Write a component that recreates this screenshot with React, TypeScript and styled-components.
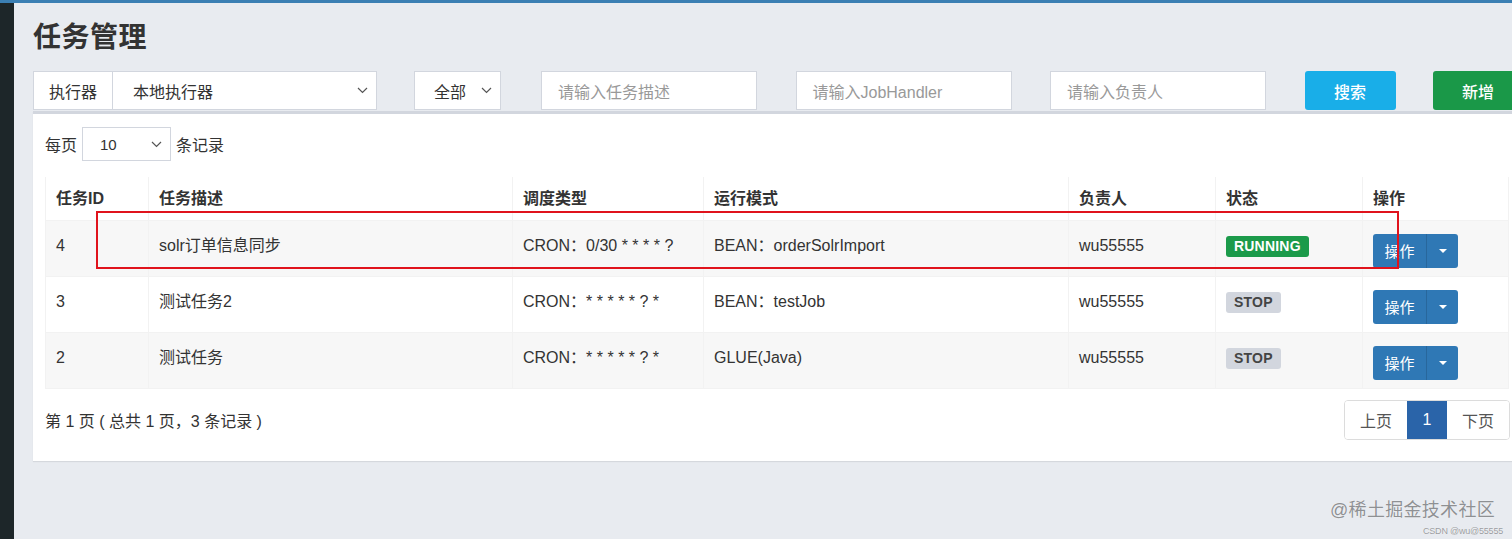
import React from "react";
import styled, { createGlobalStyle } from "styled-components";

const GlobalStyle = createGlobalStyle`
  html, body {
    margin: 0;
    padding: 0;
    overflow: hidden;
    background: #e8ebf0;
  }
  body {
    font-family: "Liberation Sans", "Noto Sans CJK SC", sans-serif;
    color: #333;
    font-size: 16px;
  }
  * { box-sizing: border-box; }
`;

const Page = styled.div`
  position: relative;
  height: 539px;
  display: flex;
  flex-direction: column;
`;

const TopBar = styled.div`
  height: 3px;
  background: #3b7fb3;
  flex: none;
`;

const Body = styled.div`
  display: flex;
  flex: 1;
`;

const Sidebar = styled.div`
  width: 14px;
  flex: none;
  background: #1d2629;
`;

const Main = styled.div`
  width: 1506px;
  flex: none;
  padding: 18px 0 0 19px;
`;

const Title = styled.h1`
  margin: 0;
  font-size: 28px;
  line-height: 34px;
  font-weight: 700;
  color: #333;
  letter-spacing: 0.5px;
`;

const FilterRow = styled.div`
  display: flex;
  align-items: stretch;
  height: 39px;
  margin-top: 16px;
`;

const InputGroup = styled.div`
  display: flex;
  width: 344px;
  margin-right: 37px;
`;

const Addon = styled.div`
  width: 79px;
  display: flex;
  align-items: center;
  justify-content: center;
  background: #fff;
  border: 1px solid #d2d6de;
  border-right: none;
  font-size: 16px;
  color: #333;
`;

const SelectBox = styled.div<{ $w: number; $pl: number; $mr?: number; $h?: number }>`
  width: ${(p) => p.$w}px;
  height: ${(p) => (p.$h ? `${p.$h}px` : "auto")};
  margin-right: ${(p) => p.$mr ?? 0}px;
  display: flex;
  align-items: center;
  justify-content: space-between;
  padding: 0 8px 0 ${(p) => p.$pl}px;
  background: #fff;
  border: 1px solid #d2d6de;
  font-size: 16px;
  color: #333;
  flex: none;
`;

const TextInput = styled.div`
  width: 216px;
  margin-right: 38.5px;
  display: flex;
  align-items: center;
  padding-left: 16px;
  background: #fff;
  border: 1px solid #d2d6de;
  color: #999;
  font-size: 16px;
  flex: none;
`;

const Button = styled.div<{ $bg: string; $mr?: number }>`
  width: 91px;
  flex: none;
  margin-right: ${(p) => p.$mr ?? 0}px;
  display: flex;
  align-items: center;
  justify-content: center;
  background: ${(p) => p.$bg};
  border-radius: 3px;
  color: #fff;
  font-size: 16px;
  font-weight: 500;
`;

const Box = styled.div`
  margin-top: 1px;
  width: 1487px;
  background: #fff;
  border-top: 3px solid #d2d6de;
  box-shadow: 0 1px 1px rgba(0, 0, 0, 0.08);
  padding: 13px 12px 21px;
`;

const LengthRow = styled.div`
  display: flex;
  align-items: center;
  gap: 5px;
  height: 34px;
  font-size: 16px;
`;

const Table = styled.table`
  margin-top: 16px;
  width: 1463px;
  border-collapse: collapse;
  table-layout: fixed;
  font-size: 16px;
`;

const Th = styled.th`
  text-align: left;
  font-weight: 700;
  padding: 10px 10px;
  line-height: 23px;
  border: 1px solid #f2f2f2;
  border-top: none;
  color: #333;
`;

const Tr = styled.tr<{ $striped?: boolean }>`
  background: ${(p) => (p.$striped ? "#f7f7f7" : "#fff")};
`;

const Td = styled.td`
  padding: 13px 10px 8px;
  line-height: 23px;
  vertical-align: top;
  border: 1px solid #f2f2f2;
  color: #333;
  white-space: nowrap;
`;

const Badge = styled.span<{ $running?: boolean }>`
  display: inline-flex;
  align-items: center;
  height: 21px;
  margin-top: 2px;
  padding: 0 8px;
  border-radius: 3px;
  font-size: 14px;
  font-weight: 700;
  letter-spacing: 0.2px;
  background: ${(p) => (p.$running ? "#1b9a4a" : "#d2d6de")};
  color: ${(p) => (p.$running ? "#fff" : "#444")};
  vertical-align: top;
`;

const BtnGroup = styled.div`
  display: inline-flex;
  height: 34px;
  border-radius: 3px;
  overflow: hidden;
  background: #2f78b5;
  vertical-align: top;
`;

const BtnMain = styled.div`
  width: 53px;
  display: flex;
  align-items: center;
  justify-content: center;
  color: #fff;
  font-size: 15px;
`;

const BtnCaret = styled.div`
  width: 32px;
  display: flex;
  align-items: center;
  justify-content: center;
  border-left: 1px solid #28679c;
`;

const Caret = styled.span`
  width: 0;
  height: 0;
  border-left: 4px solid transparent;
  border-right: 4px solid transparent;
  border-top: 4px solid #fff;
`;

const FooterRow = styled.div`
  display: flex;
  align-items: center;
  justify-content: space-between;
  margin-top: 11px;
  width: 1465px;
`;

const Info = styled.div`
  font-size: 16px;
  color: #333;
  margin-top: -1px;
`;

const Pager = styled.div`
  display: flex;
  height: 40px;
  border: 1px solid #dcdcdc;
  border-radius: 4px;
  overflow: hidden;
`;

const PageItem = styled.div<{ $active?: boolean; $w: number }>`
  width: ${(p) => p.$w}px;
  display: flex;
  align-items: center;
  justify-content: center;
  font-size: 16px;
  color: ${(p) => (p.$active ? "#fff" : "#555")};
  background: ${(p) => (p.$active ? "#2a64a9" : "#fff")};
`;

const Annotation = styled.div`
  position: absolute;
  left: 96px;
  top: 211px;
  width: 1303px;
  height: 58px;
  border: 2px solid #e0131c;
  pointer-events: none;
`;

const Watermark = styled.div`
  position: absolute;
  right: 17px;
  top: 499px;
  text-align: right;
  color: #8e9093;
  font-size: 18px;
  line-height: 22px;
  letter-spacing: 0.3px;
  text-shadow: 0 0 1px #fff;
`;

const SmallMark = styled.div`
  font-size: 9px;
  line-height: 12px;
  letter-spacing: -0.2px;
  margin-top: 4px;
  margin-right: -8px;
  color: #9a9ca0;
`;

const Chevron = () => (
  <svg width="11" height="7" viewBox="0 0 11 7" fill="none">
    <path d="M1 1l4.5 4.5L10 1" stroke="#555" strokeWidth="1.2" />
  </svg>
);

type Row = {
  id: number;
  desc: string;
  cron: string;
  mode: string;
  owner: string;
  running: boolean;
};

const rows: Row[] = [
  { id: 4, desc: "solr订单信息同步", cron: "CRON：0/30 * * * * ?", mode: "BEAN：orderSolrImport", owner: "wu55555", running: true },
  { id: 3, desc: "测试任务2", cron: "CRON：* * * * * ? *", mode: "BEAN：testJob", owner: "wu55555", running: false },
  { id: 2, desc: "测试任务", cron: "CRON：* * * * * ? *", mode: "GLUE(Java)", owner: "wu55555", running: false },
];

const colWidths = [103, 364, 191, 365, 147, 147, 146];
const headers = ["任务ID", "任务描述", "调度类型", "运行模式", "负责人", "状态", "操作"];

export default function App() {
  return (
    <Page>
      <GlobalStyle />
      <TopBar />
      <Body>
        <Sidebar />
        <Main>
          <Title>任务管理</Title>
          <FilterRow>
            <InputGroup>
              <Addon>执行器</Addon>
              <SelectBox $w={265} $pl={20}>
                <span>本地执行器</span>
                <Chevron />
              </SelectBox>
            </InputGroup>
            <SelectBox $w={87} $pl={19} $mr={40}>
              <span>全部</span>
              <Chevron />
            </SelectBox>
            <TextInput>请输入任务描述</TextInput>
            <TextInput>请输入JobHandler</TextInput>
            <TextInput>请输入负责人</TextInput>
            <Button $bg="#19aee8" $mr={37}>搜索</Button>
            <Button $bg="#1a9848">新增</Button>
          </FilterRow>
          <Box>
            <LengthRow>
              <span>每页</span>
              <SelectBox $w={89} $pl={17} $h={34}>
                <span style={{ fontSize: 15 }}>10</span>
                <Chevron />
              </SelectBox>
              <span>条记录</span>
            </LengthRow>
            <Table>
              <colgroup>
                {colWidths.map((w, i) => (
                  <col key={i} style={{ width: w }} />
                ))}
              </colgroup>
              <thead>
                <tr>
                  {headers.map((h) => (
                    <Th key={h}>{h}</Th>
                  ))}
                </tr>
              </thead>
              <tbody>
                {rows.map((r, i) => (
                  <Tr key={r.id} $striped={i % 2 === 0}>
                    <Td>{r.id}</Td>
                    <Td>{r.desc}</Td>
                    <Td>{r.cron}</Td>
                    <Td>{r.mode}</Td>
                    <Td>{r.owner}</Td>
                    <Td>
                      <Badge $running={r.running}>{r.running ? "RUNNING" : "STOP"}</Badge>
                    </Td>
                    <Td>
                      <BtnGroup>
                        <BtnMain>操作</BtnMain>
                        <BtnCaret>
                          <Caret />
                        </BtnCaret>
                      </BtnGroup>
                    </Td>
                  </Tr>
                ))}
              </tbody>
            </Table>
            <FooterRow>
              <Info>第 1 页 ( 总共 1 页，3 条记录 )</Info>
              <Pager>
                <PageItem $w={62}>上页</PageItem>
                <PageItem $w={40} $active>1</PageItem>
                <PageItem $w={62}>下页</PageItem>
              </Pager>
            </FooterRow>
          </Box>
        </Main>
      </Body>
      <Annotation />
      <Watermark>
        @稀土掘金技术社区
        <SmallMark>CSDN @wu@55555</SmallMark>
      </Watermark>
    </Page>
  );
}
